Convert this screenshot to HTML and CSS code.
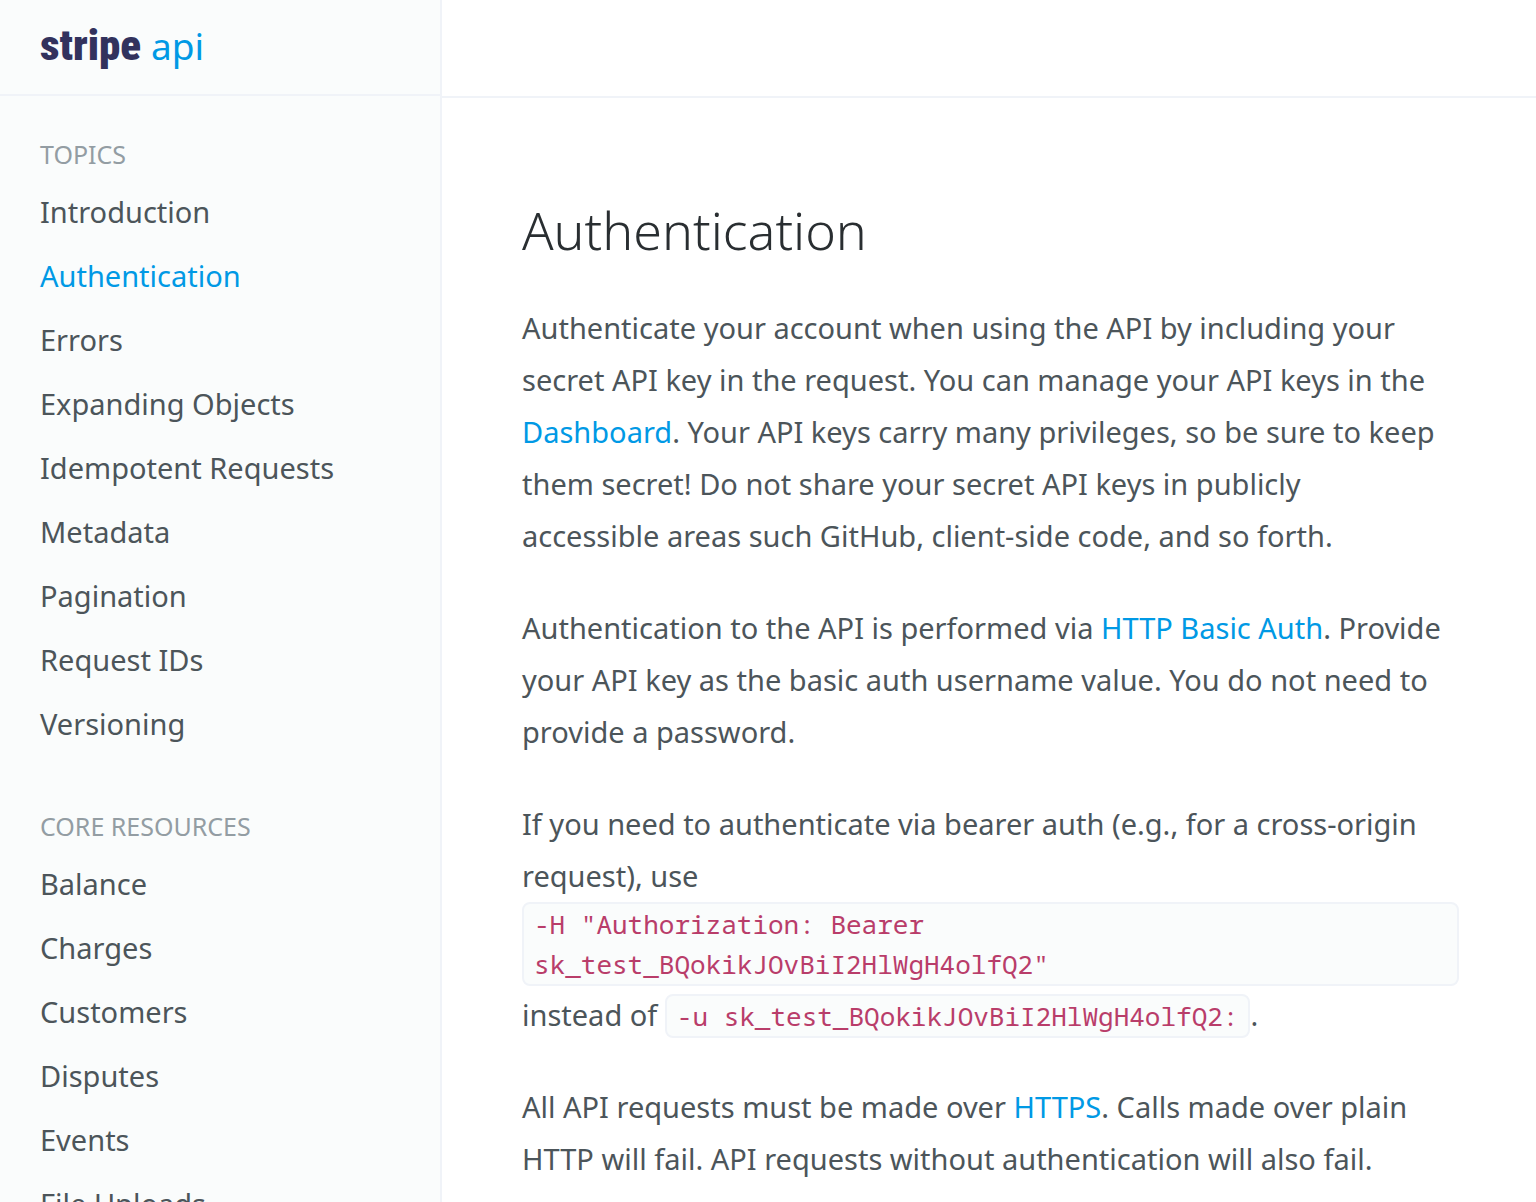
FILE: index.html
```html
<!DOCTYPE html>
<html lang="en">
<head>
<meta charset="utf-8">
<meta name="viewport" content="width=device-width, initial-scale=1">
<title>Stripe API Reference</title>
<link rel="stylesheet" href="styles.css">
</head>
<body>
<div class="layout">
  <aside class="sidebar">
    <header class="brand">
      <a class="brand-link" href="#"><span class="brand-name">stripe</span><span class="brand-api">api</span></a>
    </header>
    <nav class="nav" aria-label="API reference">
      <section class="nav-group">
        <h2 class="nav-heading">TOPICS</h2>
        <ul class="nav-list">
          <li><a class="nav-link" href="#">Introduction</a></li>
          <li><a class="nav-link active" href="#authentication" aria-current="page">Authentication</a></li>
          <li><a class="nav-link" href="#">Errors</a></li>
          <li><a class="nav-link" href="#">Expanding Objects</a></li>
          <li><a class="nav-link" href="#">Idempotent Requests</a></li>
          <li><a class="nav-link" href="#">Metadata</a></li>
          <li><a class="nav-link" href="#">Pagination</a></li>
          <li><a class="nav-link" href="#">Request IDs</a></li>
          <li><a class="nav-link" href="#">Versioning</a></li>
        </ul>
      </section>
      <section class="nav-group">
        <h2 class="nav-heading">CORE RESOURCES</h2>
        <ul class="nav-list">
          <li><a class="nav-link" href="#">Balance</a></li>
          <li><a class="nav-link" href="#">Charges</a></li>
          <li><a class="nav-link" href="#">Customers</a></li>
          <li><a class="nav-link" href="#">Disputes</a></li>
          <li><a class="nav-link" href="#">Events</a></li>
          <li><a class="nav-link" href="#">File Uploads</a></li>
        </ul>
      </section>
    </nav>
  </aside>
  <div class="page">
    <div class="topbar"></div>
    <main class="content" id="authentication">
      <h1 class="title">Authentication</h1>
      <p>Authenticate your account when using the API by including your<br> secret API key in the request. You can manage your API keys in the<br> <a href="#">Dashboard</a>. Your API keys carry many privileges, so be sure to keep<br> them secret! Do not share your secret API keys in publicly<br> accessible areas such GitHub, client-side code, and so forth.</p>
      <p>Authentication to the API is performed via <a href="#">HTTP Basic Auth</a>. Provide<br> your API key as the basic auth username value. You do not need to<br> provide a password.</p>
      <p>If you need to authenticate via bearer auth (e.g., for a cross-origin<br> request), use <code>-H "Authorization: Bearer sk_test_BQokikJOvBiI2HlWgH4olfQ2"</code> instead of <code>-u sk_test_BQokikJOvBiI2HlWgH4olfQ2:</code>.</p>
      <p>All API requests must be made over <a href="#">HTTPS</a>. Calls made over plain<br> HTTP will fail. API requests without authentication will also fail.</p>
    </main>
  </div>
</div>
</body>
</html>
```
FILE: styles.css
```css
* {
  box-sizing: border-box;
}

body {
  margin: 0;
  background: #fff;
  color: #4c555a;
  font-family: "Noto Sans", sans-serif;
  font-size: 29px;
  line-height: 52px;
}

a {
  color: #0099e5;
  text-decoration: none;
}

.layout {
  display: flex;
  height: 100vh;
  overflow: hidden;
}

.sidebar {
  flex: 0 0 442px;
  overflow: hidden;
  background: #fafcfc;
  border-right: 2px solid #f0f3f8;
}

.brand {
  height: 96px;
  padding: 0 40px;
  border-bottom: 2px solid #f0f3f8;
}

.brand-link {
  display: flex;
  align-items: baseline;
  gap: 10px;
  line-height: 90px;
}

.brand-name {
  color: #32325d;
  font-family: "Roboto Condensed", "Noto Sans CJK JP", sans-serif;
  font-size: 43px;
  font-weight: 900;
}

.brand-api {
  font-size: 37px;
}

.nav {
  display: flex;
  flex-direction: column;
  gap: 54px;
  padding: 42px 40px;
}

.nav-heading {
  margin: 0 0 10px;
  color: #939da3;
  font-size: 25px;
  font-weight: 400;
  line-height: 32px;
}

.nav-list {
  margin: 0;
  padding: 0;
  list-style: none;
}

.nav-link {
  display: block;
  color: #4c555a;
  line-height: 64px;
}

.nav-link.active {
  color: #0099e5;
}

.page {
  flex: 1;
  min-width: 0;
  overflow: hidden;
}

.topbar {
  height: 98px;
  border-bottom: 2px solid #f0f3f8;
}

.content {
  padding: 96px 77px 80px 80px;
}

.title {
  margin: 0 0 36px;
  color: #292e31;
  font-size: 52px;
  font-weight: 300;
  line-height: 72px;
}

.content p {
  margin: 0 0 40px;
}

code {
  display: inline-block;
  max-width: 100%;
  padding: 0 10px;
  background: #fafcfc;
  border: 2px solid #f0f3f8;
  border-radius: 8px;
  color: #b93d6a;
  font-family: "Noto Sans Mono", "DejaVu Sans Mono", monospace;
  font-size: 26px;
  line-height: 40px;
}
```
